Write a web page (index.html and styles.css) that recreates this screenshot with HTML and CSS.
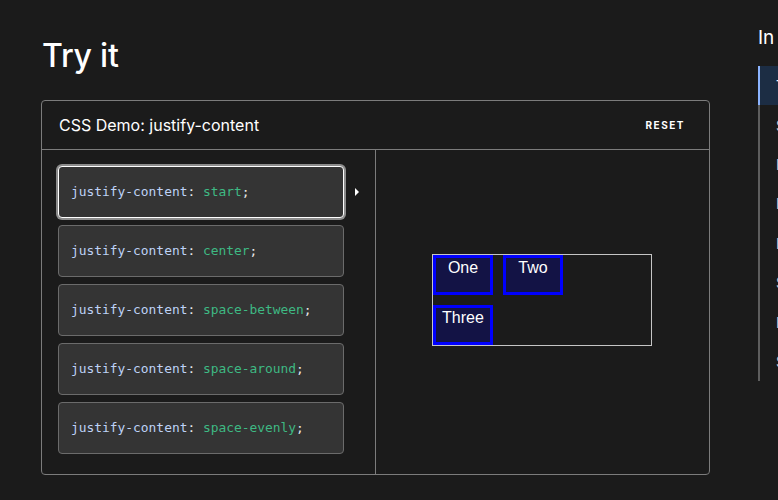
FILE: index.html
```html
<!DOCTYPE html>
<html lang="en">
<head>
<meta charset="utf-8">
<title>Try it</title>
<link rel="stylesheet" href="styles.css">
</head>
<body>
<div class="page">
  <main class="main">
    <h2 class="title">Try it</h2>
    <section class="demo">
      <header class="demo-header">
        <span class="demo-name">CSS Demo: justify-content</span>
        <button class="reset">RESET</button>
      </header>
      <div class="demo-body">
        <div class="choices">
          <div class="choice-row">
            <div class="choice selected"><code><span class="prop">justify-content</span>: <span class="val">start</span>;</code></div>
            <span class="marker"></span>
          </div>
          <div class="choice-row">
            <div class="choice"><code><span class="prop">justify-content</span>: <span class="val">center</span>;</code></div>
          </div>
          <div class="choice-row">
            <div class="choice"><code><span class="prop">justify-content</span>: <span class="val">space-between</span>;</code></div>
          </div>
          <div class="choice-row">
            <div class="choice"><code><span class="prop">justify-content</span>: <span class="val">space-around</span>;</code></div>
          </div>
          <div class="choice-row">
            <div class="choice"><code><span class="prop">justify-content</span>: <span class="val">space-evenly</span>;</code></div>
          </div>
        </div>
        <div class="output">
          <div class="example">
            <div class="item">One</div>
            <div class="item">Two</div>
            <div class="item">Three</div>
          </div>
        </div>
      </div>
    </section>
  </main>
  <aside class="toc">
    <h2 class="toc-title">In this article</h2>
    <ul class="toc-list">
      <li class="toc-item active">Try it</li>
      <li class="toc-item">Syntax</li>
      <li class="toc-item">Formal definition</li>
      <li class="toc-item">Formal syntax</li>
      <li class="toc-item">Examples</li>
      <li class="toc-item">Specifications</li>
      <li class="toc-item">Browser compatibility</li>
      <li class="toc-item">See also</li>
    </ul>
  </aside>
</div>
</body>
</html>
```

FILE: styles.css
```css
html, body {
  margin: 0;
  padding: 0;
  background: #1b1b1b;
  color: #ffffff;
  overflow: hidden;
  font-family: Inter, "Noto Sans", sans-serif;
}

.page {
  display: flex;
  align-items: flex-start;
  padding-left: 41px;
  gap: 48px;
  width: 1100px;
}

.main {
  width: 669px;
  flex: none;
}

.title {
  margin: 37px 0 0 1px;
  font-size: 32px;
  line-height: 38px;
  font-weight: 500;
  letter-spacing: -0.2px;
}

.demo {
  margin-top: 25px;
  border: 1px solid #7c7c7c;
  border-radius: 4px;
}

.demo-header {
  height: 48px;
  display: flex;
  align-items: center;
  justify-content: space-between;
  padding: 0 17px 0 17px;
  border-bottom: 1px solid #7c7c7c;
}

.demo-name {
  font-size: 16px;
  color: #ffffff;
}

.reset {
  background: none;
  border: none;
  color: #ffffff;
  font-family: Inter, "Noto Sans", sans-serif;
  font-size: 10px;
  font-weight: 700;
  letter-spacing: 1.5px;
  padding: 4px 7px;
}

.demo-body {
  display: grid;
  grid-template-columns: 333px 333px;
  column-gap: 1px;
  background: #7c7c7c;
  border-radius: 0 0 4px 4px;
}

.choices {
  background: #1b1b1b;
  padding: 16px 0 20px 16px;
  display: flex;
  flex-direction: column;
  gap: 7px;
  border-bottom-left-radius: 4px;
}

.choice-row {
  display: flex;
  align-items: center;
}

.choice {
  box-sizing: border-box;
  width: 286px;
  height: 52px;
  display: flex;
  align-items: center;
  padding: 0 0 1px 12px;
  background: #343434;
  border: 1px solid #6b6b6b;
  border-radius: 4px;
}

.choice.selected {
  border-color: #ffffff;
  box-shadow: 0 0 0 2px #8c8c8c;
}

.choice code {
  font-family: "DejaVu Sans Mono", "Liberation Mono", monospace;
  font-size: 12.9px;
  color: #e8e8e8;
}

.prop {
  color: #bed2f6;
}

.val {
  color: #3eb983;
}

.marker {
  margin-left: 11px;
  width: 0;
  height: 0;
  border-top: 4px solid transparent;
  border-bottom: 4px solid transparent;
  border-left: 4px solid #ffffff;
}

.output {
  background: #1b1b1b;
  display: flex;
  align-items: center;
  justify-content: center;
  padding: 0 1px 24px 0;
  border-bottom-right-radius: 4px;
}

.example {
  box-sizing: border-box;
  width: 220px;
  border: 1px solid #c5c5c5;
  display: grid;
  grid-template-columns: 60px 60px;
  gap: 10px;
}

.item {
  box-sizing: border-box;
  height: 40px;
  background: #131345;
  border: 3px solid #0000ff;
  font-family: "Liberation Sans", Arial, sans-serif;
  font-size: 16px;
  line-height: 19px;
  text-align: center;
  color: #ffffff;
}

.toc {
  width: 260px;
  flex: none;
}

.toc-title {
  margin: 26px 0 0 0;
  font-size: 19px;
  line-height: 24px;
  font-weight: 400;
  color: #ffffff;
}

.toc-list {
  list-style: none;
  margin: 16px 0 0 0;
  padding: 0;
  border-left: 2px solid #5e5e5e;
}

.toc-item {
  height: 39.4px;
  display: flex;
  align-items: center;
  padding-left: 16px;
  font-size: 14px;
  color: #cdcdcd;
}

.toc-item.active {
  background: #1c2d44;
  color: #ffffff;
  margin-left: -2px;
  border-left: 2px solid #8cb4ff;
}
```
